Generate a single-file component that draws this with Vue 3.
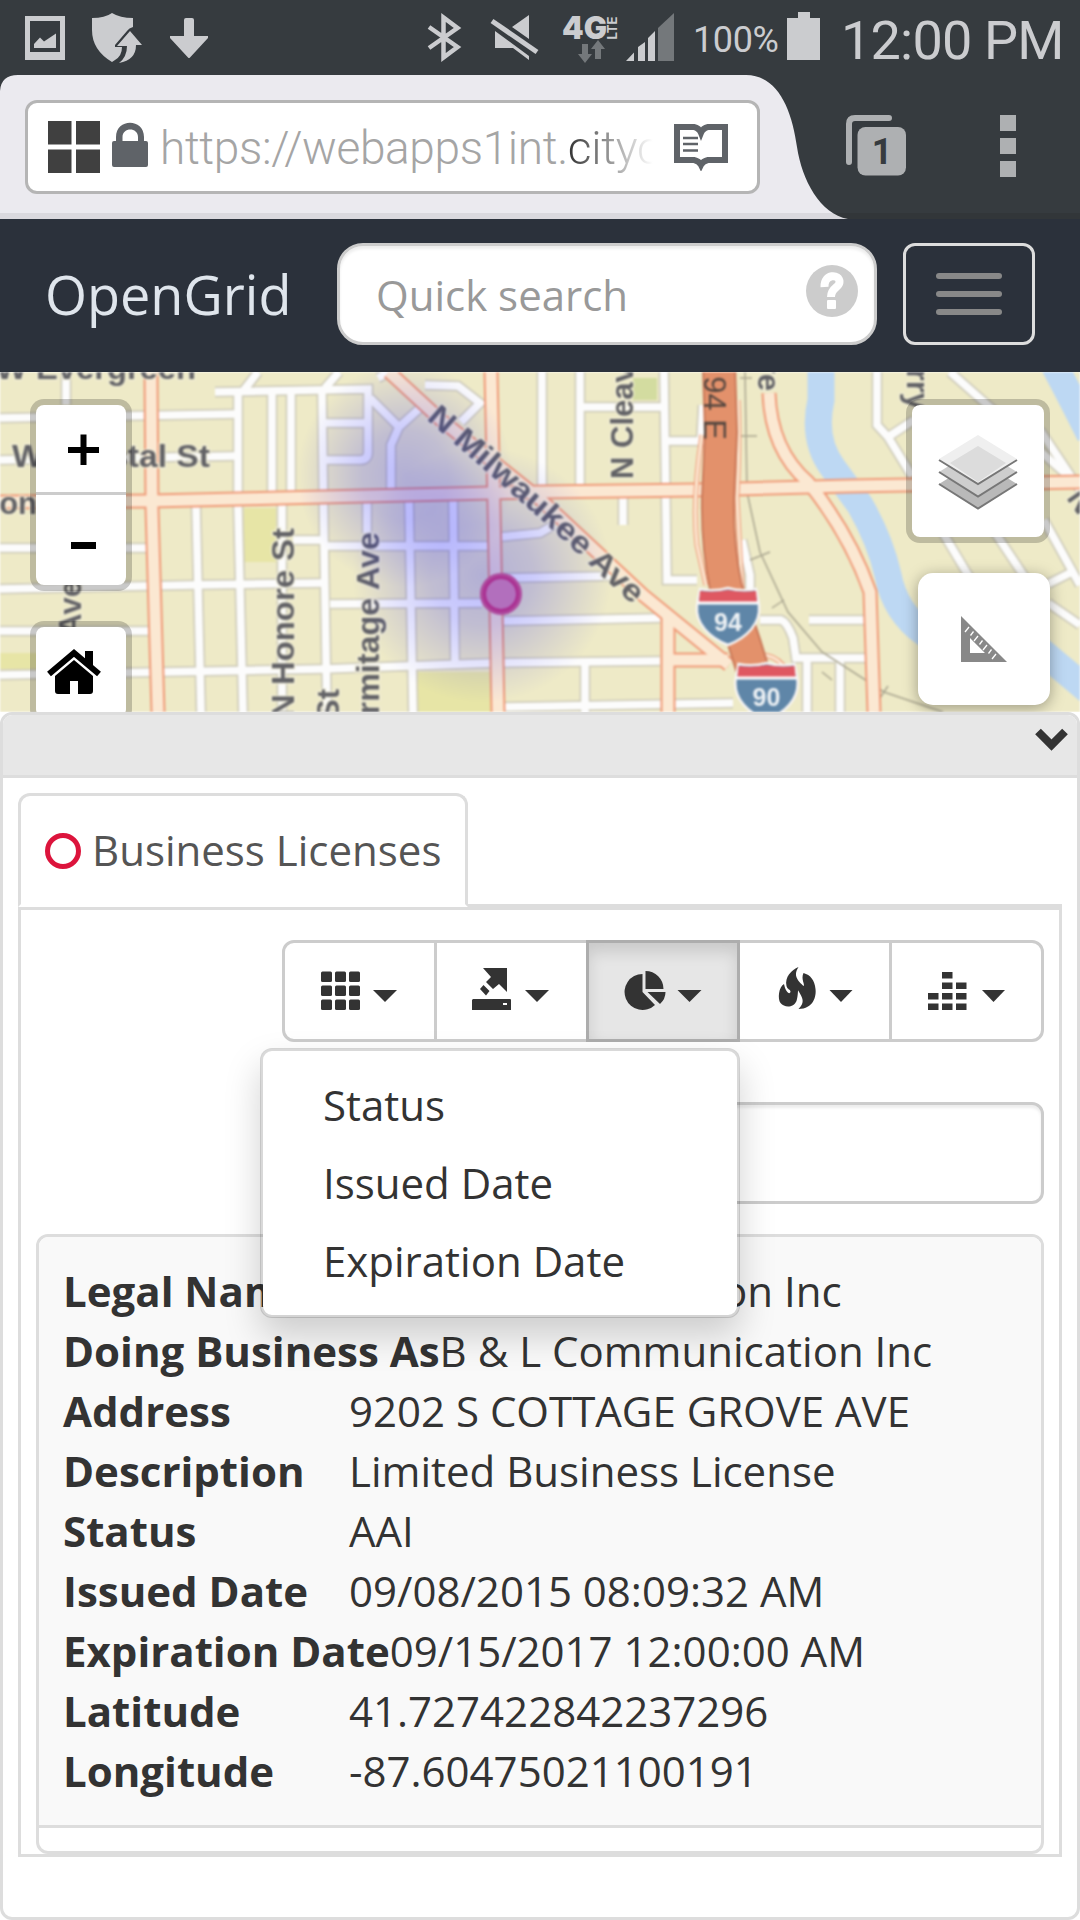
<script setup>
const whiteRoads = [
  'M0 418L237 414', 'M0 460L235 456', 'M0 548H146', 'M0 589L193 585L324 583', 'M0 631H148',
  'M0 675L324 669L492 663L660 661', 'M66 372V405', 'M238 393V508L243 712', 'M196 505L201 712',
  'M272 393V493', 'M291 393V493', 'M282 500V712', 'M322 393L324 538L327 712', 'M215 392L368 389V452Q368 460 360 460H325',
  'M325 423H368', 'M370 398L399 427L420 408M399 427L391 445V490', 'M244 390L258 372M325 388L339 372',
  'M367 500V533', 'M409 500L413 712', 'M453 500L455 662', 'M293 540H322', 'M327 546H489', 'M330 604L482 603',
  'M500 537L540 533L554 525', 'M503 578L610 576', 'M503 621L660 618', 'M505 707L733 703',
  'M425 385L458 386L480 403L461 422', 'M580 372V486', 'M542 372V486', 'M664 372L667 580H697', 'M580 407H662',
  'M667 441H701L703 405', 'M623 497V525', 'M585 662V712', 'M877 372V425L888 437L912 476', 'M888 437L914 420',
  'M950 372L1066 474', 'M1040 430L1080 490', 'M1044 520L1080 585', 'M940 528L980 595', 'M990 525L1030 585',
  'M1048 584L1072 572', 'M1048 603L1080 625', 'M809 620H864', 'M760 620H781Q787 622 793 638L796 658H867',
  'M807 658V712', 'M840 658V712', 'M742 540L750 575V590', 'M378 378L390 372'
]
const redRoads = [
  'M151 372L152 508L158 712', 'M0 502L151 501L279 498L492 493L540 492L695 490L850 486L1080 482',
  'M491 372L494 508L498 712', 'M389 372L441 420L541 500L643 595L729 665', 'M668 615V712', 'M672 660H728',
  'M769 393Q771 450 808 482Q850 535 870 592L874 712'
]
const records = [
  ['Legal Name', 'B & L Communication Inc'],
  ['Doing Business As', 'B & L Communication Inc'],
  ['Address', '9202 S COTTAGE GROVE AVE'],
  ['Description', 'Limited Business License'],
  ['Status', 'AAI'],
  ['Issued Date', '09/08/2015 08:09:32 AM'],
  ['Expiration Date', '09/15/2017 12:00:00 AM'],
  ['Latitude', '41.727422842237296'],
  ['Longitude', '-87.60475021100191']
]
const chartOptions = ['Status', 'Issued Date', 'Expiration Date']
const ticks = [0, 1, 2, 3, 4, 5, 6]
</script>

<template>
  <div class="screen">
    <header class="status">
      <svg class="left" width="220" height="75" viewBox="0 0 220 75" fill="#cbcccf">
        <path d="M25 16H65V60H25ZM30 21V52H60V21Z" fill-rule="evenodd" />
        <path d="M34 48V44L40 37.5L44 41.5L56 33.5V48Z" />
        <path d="M92 18Q105 18 112 13Q120 18 133 18V27Q129 28 127 31L115 45V47H122Q122 56 115 60L112 62Q92 50 92 30Z" />
        <path d="M130 31L142 45H136Q136 60 119 63Q127 57 127 46H117Z" />
        <path d="M184 20Q184 18 186 18H192Q194 18 194 20V36H208V38L190 57.5Q189 58.500 188 57.500L170 38V36H184Z" />
      </svg>
      <svg width="262" height="75" viewBox="424 0 262 75" fill="#cbcccf">
        <path d="M429 27L457.500 47L443.500 57.500V17.500L457.500 28L429 48" fill="none" stroke="#cbcccf" stroke-width="4.500" />
        <path d="M512 27L529 15V39ZM495 31L529 56V60L513 48H495Z" />
        <path d="M492 21L537 52" stroke="#cbcccf" stroke-width="5" />
        <text x="562" y="39" class="net" textLength="45" lengthAdjust="spacingAndGlyphs">4G</text>
        <text transform="translate(617 39.500) rotate(-90)" class="lte" textLength="23" lengthAdjust="spacingAndGlyphs">LTE</text>
        <g fill="#74787b"><path d="M582 44H588V54H592L585 63L578 54H582Z" /><path d="M595 59V49H591L598 40L605 49H601V59Z" /><path d="M658 28L674 13V61H658Z" /></g>
        <path d="M626 61L634 52.500V61ZM638 47L645 42V61H638ZM648 38L655 31V61H648Z" />
      </svg>
      <span class="percent">100%</span>
      <svg width="34" height="75" viewBox="787 0 34 75"><path d="M787 18H798V12H810V18H820V60H787Z" fill="#cbcccf" /></svg>
      <span class="clock">12:00 PM</span>
    </header>

    <section class="browser">
      <svg class="tabshape" width="1080" height="144" viewBox="0 75 1080 144">
        <rect y="213" width="1080" height="6" x="0" fill="#323639" />
        <clipPath id="tabclip"><path d="M0 91Q1 75 18 75H746C778 75 792 110 797 147C802 180 820 214 848 219H0Z" /></clipPath>
        <g clip-path="url(#tabclip)"><rect y="75" width="860" height="138" fill="#ebeaef" /><rect y="213" width="860" height="6" fill="#dad9de" /></g>
      </svg>
      <div class="urlbox">
        <svg width="104" height="60" viewBox="46 117 104 60">
          <path d="M48 121H71.500V144.500H48ZM76 121H100V144.500H76ZM48 149.500H71.500V173H48ZM76 149.500H100V173H76Z" fill="#404040" />
          <path d="M114 141H116V137C116 118 144 118 144 137V141H146Q148 141 148 143V165Q148 167 146 167H114Q112 167 112 165V143Q112 141 114 141ZM122.500 141H138V137C138 127 122.500 127 122.500 137Z" fill="#5f6368" fill-rule="evenodd" />
        </svg>
        <div class="url">https://webapps1int.<span>cityc</span></div>
        <svg class="reader" width="54" height="48" viewBox="674 126 54 48">
          <path d="M677 130H694Q699 131 701 136Q703 131 708 130H725V163H708Q703 164 701 168Q699 164 694 163H677Z" fill="#fff" stroke="#5f6368" stroke-width="6" />
          <path d="M683 141H698M683 147H698M683 153.500H698" stroke="#5f6368" stroke-width="2.500" />
        </svg>
      </div>
      <svg class="tabs" width="62" height="62" viewBox="845 114 62 62">
        <path d="M849 162V124Q849 118 855 118H889" fill="none" stroke="#aeb0b2" stroke-width="6" stroke-linecap="round" />
        <rect x="857.500" y="127" width="48.500" height="48.500" rx="8" fill="#aeb0b2" />
        <text x="882" y="164" class="count">1</text>
      </svg>
      <div class="dots"><i></i><i></i><i></i></div>
    </section>

    <nav class="navbar">
      <div class="brand">OpenGrid</div>
      <div class="quick">
        <span>Quick search</span>
        <svg width="52" height="52" viewBox="806 265 52 52">
          <circle cx="832" cy="291" r="26" fill="#ccc" />
          <path d="M824.500 287C824 273.500 839.500 273.500 839.500 282C839.500 288 831 287 831 297" fill="none" stroke="#fff" stroke-width="8" />
          <rect x="827" y="300" width="9" height="9" rx="1" fill="#fff" />
        </svg>
      </div>
      <div class="burger"><i></i><i></i><i></i></div>
    </nav>

    <section class="map">
      <svg class="tiles" width="1080" height="340" viewBox="0 372 1080 340">
        <defs>
          <radialGradient id="heat"><stop offset="0" stop-color="#00f" stop-opacity=".25" /><stop offset=".4" stop-color="#00f" stop-opacity=".19" /><stop offset="1" stop-color="#00f" stop-opacity="0" /></radialGradient>
          <path id="milwaukee" d="M426 419L480 466L545 523L634 606L680 650" />
        </defs>
        <rect y="372" width="1080" height="340" fill="#eeeac7" />
        <path d="M244 508H276V562H244ZM418 672H491V712H418ZM0 653H60V669H0Z" fill="#e7e5a6" />
        <path d="M633 378H657V400H633Z" fill="#d3dca0" />
        <path d="M821 365V400Q812 440 833 468L860 505Q880 540 888 575C900 640 960 650 1000 665M1040 650L1090 692M1054 365Q1070 395 1090 435" fill="none" stroke="#bdd8f3" stroke-width="27" />
        <g fill="none" stroke="#d0cdbc" stroke-width="11"><path v-for="d in whiteRoads" :key="d" :d="d" /></g>
        <g fill="none" stroke="#fcfcfc" stroke-width="7.500"><path v-for="d in whiteRoads" :key="d" :d="d" /></g>
        <path d="M745 372L747 492L760 552L788 612L822 652L884 692L943 712M740 378H752M738 436H757M750 560L770 552M772 608L784 600M880 698L888 686M822 672L832 680" fill="none" stroke="#aaa690" stroke-width="1.500" />
        <g fill="none" stroke="#f09a78" stroke-width="15"><path v-for="d in redRoads" :key="d" :d="d" /></g>
        <g fill="none" stroke="#fbe8d2" stroke-width="11"><path v-for="d in redRoads" :key="d" :d="d" /></g>
        <path d="M702 435Q692 500 697 545L706 585M738 400Q740 440 737 498L742 590M765 655Q780 658 788 672" fill="none" stroke="#f09a78" stroke-width="5" />
        <path d="M702 435Q692 500 697 545L706 585M738 400Q740 440 737 498L742 590M765 655Q780 658 788 672" fill="none" stroke="#fbe8d2" stroke-width="3" />
        <path d="M719 365L721 432L718 498Q717 545 726 588L745 645L762 700" fill="none" stroke="#ca7959" stroke-width="34" />
        <path d="M719 365L721 432L718 498Q717 545 726 588L745 645L762 700" fill="none" stroke="#e3916b" stroke-width="30" />
        <g class="labels">
          <text x="-4" y="379" textLength="200" lengthAdjust="spacingAndGlyphs">W Evergreen</text>
          <text x="12" y="467" textLength="198" lengthAdjust="spacingAndGlyphs">W Crystal St</text>
          <text x="37" y="514" text-anchor="end">W Division</text>
          <text transform="translate(81 580) rotate(-90)" text-anchor="end">N Wood Ave</text>
          <text transform="translate(294 718) rotate(-90)" textLength="190" lengthAdjust="spacingAndGlyphs">N Honore St</text>
          <text transform="translate(339 689) rotate(-90)" text-anchor="end">N Paulina St</text>
          <text transform="translate(379 532) rotate(-90)" text-anchor="end" textLength="256" lengthAdjust="spacingAndGlyphs">N Hermitage Ave</text>
          <text transform="translate(633 479) rotate(-90)">N Cleaver</text>
          <text class="plain" transform="translate(704 440) rotate(90)" text-anchor="end">I 94 E</text>
          <text transform="translate(758 391) rotate(90)" text-anchor="end">Ave</text>
          <text transform="translate(907 410) rotate(90)" text-anchor="end">Cherry</text>
          <text transform="translate(1066 498) rotate(55)">N</text>
          <text><textPath href="#milwaukee" textLength="278" lengthAdjust="spacingAndGlyphs">N Milwaukee Ave</textPath></text>
        </g>
        <g v-for="s in [{ n: '94', x: 728, y: 588 }, { n: '90', x: 766.500, y: 663 }]" :key="s.n" :transform="`translate(${s.x} ${s.y})`">
          <path d="M-28 1Q-14 4 0 0Q14 4 28 1L31 17C33 36 18 50 0 57C-18 50 -33 36 -31 17Z" fill="#5f86a8" stroke="#f6f4f4" stroke-width="2.500" />
          <path d="M-28 3Q-14 5 0 2Q14 5 28 3L29 14H-29Z" fill="#df5862" />
          <path d="M-30 15H30" stroke="#fff" stroke-width="3" />
          <text y="43" class="route">{{ s.n }}</text>
        </g>
        <ellipse cx="405" cy="475" rx="108" ry="112" fill="url(#heat)" />
        <ellipse cx="482" cy="575" rx="130" ry="128" fill="url(#heat)" />
        <circle cx="501" cy="594" r="17" fill="#b26fbd" />
        <circle cx="501" cy="594" r="18" fill="none" stroke="#ae4b9e" stroke-width="6" />
        <circle cx="501" cy="594" r="16.500" fill="none" stroke="#aa3092" stroke-width="3" />
      </svg>
      <div class="ctl zoom">
        <svg width="90" height="87" viewBox="36 405 90 87"><path d="M68 450H99M83.500 434.500V465" stroke="#000" stroke-width="6" /></svg>
        <svg class="minus" width="90" height="90" viewBox="36 495 90 90"><path d="M71 545.500H96" stroke="#000" stroke-width="7" /></svg>
      </div>
      <div class="ctl home">
        <svg width="90" height="90" viewBox="36 627 90 90">
          <path d="M49 674L74 653L99 674" fill="none" stroke="#000" stroke-width="6" />
          <path d="M85 651H93V666L85 660Z" />
          <path d="M55 676L74 660L93 676V691Q93 694 90 694H78V681H70V694H58Q55 694 55 691Z" />
        </svg>
      </div>
      <div class="ctl layers">
        <svg width="132" height="132" viewBox="912 405 132 132">
          <path d="M939 484L978 460L1017 484L978 509Z" fill="#b9b9b9" /><path d="M939 484L978 508.500L1017 484" fill="none" stroke="#777" stroke-width="2" />
          <path d="M939 472L978 448L1017 472L978 497Z" fill="#cecece" /><path d="M939 472L978 496.500L1017 472" fill="none" stroke="#777" stroke-width="2" />
          <path d="M939 459L978 435L1017 459L978 484Z" fill="#efefef" /><path d="M950 463L978 446L1006 463L978 482Z" fill="#dcdcdc" /><path d="M939 460L978 484L1017 460" fill="none" stroke="#777" stroke-width="2" />
        </svg>
      </div>
      <div class="measure">
        <svg width="132" height="132" viewBox="918 573 132 132">
          <path d="M961 616L1007 662H961ZM970 638V653H985Z" fill="#888" fill-rule="evenodd" />
          <path v-for="t in ticks" :key="t" :d="`M${969 + t * 4.5} ${627 + t * 4.5}l${t % 2 ? -3 : -4} ${t % 2 ? 4 : 5}`" stroke="#fff" stroke-width="1.300" />
        </svg>
      </div>
    </section>

    <main class="panel">
      <div class="bar">
        <svg width="33" height="24" viewBox="1035 728 33 24"><path d="M1038 731.500L1051.500 745L1065 731.500" fill="none" stroke="#333" stroke-width="8" /></svg>
      </div>
      <div class="tabrow">
        <div class="tab">
          <svg width="36" height="36" viewBox="0 0 36 36"><circle cx="18" cy="18" r="15.500" fill="none" stroke="#dc143c" stroke-width="5" /></svg>
          <span>Business Licenses</span>
        </div>
      </div>
      <div class="content">
        <div class="buttons">
          <button>
            <svg viewBox="285 943 149 96">
              <template v-for="r in 3" :key="r"><rect v-for="c in 3" :key="c" :x="307 + c * 14" :y="957.500 + r * 14" width="11" height="10.500" rx="1.500" /></template>
              <path d="M373 990H397L385 1002Z" />
            </svg>
          </button>
          <button>
            <svg viewBox="437 943 149 96">
              <path d="M483 968H507V992L499 984L493 989L486 982L491 977ZM480 989L483.500 985L489.500 991L486 995.500ZM473 999H510Q511 999 511 1000V1010H472V1000ZM503 1003V1005H507V1003Z" fill-rule="evenodd" />
              <path d="M525 990H549L537 1002Z" />
            </svg>
          </button>
          <button class="active">
            <svg viewBox="588.500 943 149 96">
              <path d="M642 974A18 18 0 1 0 654.500 1005L642 992ZM645 971A18 18 0 0 1 663 989H645ZM647 992H665Q665 999 659.500 1004Z" />
              <path d="M677 990H701L689 1002Z" />
            </svg>
          </button>
          <button>
            <svg viewBox="740.500 943 149 96">
              <path d="M799 967C792 970 785 977 787 986C788 990 791 989 791 992C790 995 786 992 784.500 984C779 987 778 999 781 1003C785 1008 794 1008 797 1001C799 995 798 989 799 991C803 998 806 1002 799 1009C814 1009 817 996 816 989C815 980 811 975 804 973C801 979 806 985 804 986C799 981 793 976 799 967Z" />
              <path d="M830 990H853L841.500 1002Z" />
            </svg>
          </button>
          <button>
            <svg viewBox="892 943 149 96">
              <path d="M942 972h10.500v6.500h-10.500zM942 982.500h10.500v6.500h-10.500zM956 982.500h10.500v6.500h-10.500zM928 993h10.500v6.500h-10.500zM942 993h10.500v6.500h-10.500zM956 993h10.500v6.500h-10.500zM928 1003.500h10.500v6.500h-10.500zM942 1003.500h10.500v6.500h-10.500zM956 1003.500h10.500v6.500h-10.500z" />
              <path d="M982 990H1005L993.500 1002Z" />
            </svg>
          </button>
          <ul class="menu"><li v-for="o in chartOptions" :key="o">{{ o }}</li></ul>
        </div>
        <div class="filter"></div>
        <div class="table">
          <div class="record">
            <div v-for="[k, v] in records" :key="k" class="row"><b>{{ k }}</b><span>{{ v }}</span></div>
          </div>
        </div>
      </div>
    </main>
  </div>
</template>

<style>
body { margin: 0; background: #fff; }
</style>

<style scoped>
* { box-sizing: border-box; }
svg { display: block; flex: none; }
.screen { width: 1080px; height: 1920px; overflow: hidden; font-family: "Open Sans", sans-serif; color: #333; font-size: 42px; line-height: 60px; }
.status { height: 75px; display: flex; background: #363b3f; color: #cbcccf; font-family: Roboto, sans-serif; white-space: nowrap; }
.status .left { margin-right: 204px; }
.net { font: 900 31px Inter, sans-serif; }
.lte { font: 700 13px Inter, sans-serif; }
.percent { width: 101px; padding-left: 7px; font-size: 36px; line-height: 81px; letter-spacing: -.4px; }
.clock { padding-left: 20px; font-size: 54px; line-height: 82px; letter-spacing: -.8px; }
.browser { position: relative; height: 144px; display: flex; background: #363b3f; }
.tabshape { position: absolute; inset: 0; }
.urlbox { position: relative; margin: 25px 0 0 25px; width: 735px; height: 94px; border: 3px solid #b5b5b5; border-radius: 12px; background: #fff; display: flex; align-items: center; padding-left: 18px; }
.url { margin: 2px 0 0 10px; width: 510px; overflow: hidden; white-space: nowrap; font: 300 46px/60px Roboto, sans-serif; letter-spacing: -.35px; color: #a5a5a5; }
.url span { background: linear-gradient(90deg, #333, #fff 92%); background-clip: text; color: transparent; }
.reader { margin-left: 4px; }
.tabs { margin: 39px 0 0 85px; position: relative; }
.count { font: 700 36px Roboto, sans-serif; fill: #363b3f; text-anchor: middle; }
.dots { position: relative; margin: 40px 0 0 93px; display: flex; flex-direction: column; gap: 7px; }
.dots i { width: 16px; height: 16px; background: #aeb0b2; }
.navbar { height: 153px; background: #2b313b; display: flex; padding: 24px 0 0 45px; }
.brand { width: 292px; font-size: 54px; line-height: 102px; color: #dfe5ec; }
.quick { width: 540px; height: 102px; border: 3px solid #ccc; border-radius: 26px; background: #fff; box-shadow: inset 0 3px 3px rgba(0,0,0,.075); display: flex; justify-content: space-between; padding: 0 16px 0 36px; color: #999; line-height: 97px; }
.quick svg { margin-top: 19px; }
.burger { margin-left: 26px; width: 132px; height: 102px; border: 3px solid #ddd; border-radius: 12px; display: flex; flex-direction: column; align-items: center; padding-top: 27px; gap: 12px; }
.burger i { width: 66px; height: 6px; border-radius: 3px; background: #888; }
.map { position: relative; height: 340px; overflow: hidden; }
.tiles { filter: blur(.8px); }
.labels { font: 700 31px "Liberation Sans", sans-serif; fill: #626266; stroke: #f1eed8; stroke-width: 3px; paint-order: stroke; stroke-opacity: .7; }
.labels .plain { fill: #54463f; stroke: none; font-weight: 400; }
.route { font: 700 25px "Liberation Sans", sans-serif; fill: #eef2f5; text-anchor: middle; }
.ctl { position: absolute; border: 6px solid rgba(0,0,0,.2); border-radius: 14px; background: #fff; background-clip: padding-box; }
.zoom { left: 30px; top: 27px; }
.minus { border-top: 3px solid #ccc; height: 93px; }
.home { left: 30px; top: 249px; }
.layers { left: 906px; top: 27px; }
.measure { position: absolute; left: 918px; top: 201px; border-radius: 15px; background: #fff; box-shadow: 0 3px 15px rgba(0,0,0,.35); }
.panel { height: 1208px; border: 3px solid #ddd; border-radius: 12px; background: #fff; }
.bar { height: 63px; background: #e7e7e7; border-bottom: 3px solid #ddd; border-radius: 9px 9px 0 0; display: flex; justify-content: flex-end; padding: 13px 9px 0 0; }
.tabrow { margin: 15px 15px 0; height: 114px; border-bottom: 3px solid #ddd; }
.tab { width: 450px; height: 114px; border: 3px solid #ddd; border-bottom-color: #fff; border-radius: 12px 12px 0 0; background: #fff; display: flex; align-items: center; padding-left: 24px; color: #555; white-space: nowrap; }
.tab span { margin-left: 11px; }
.tab svg { margin-top: 1px; }
.content { margin: 0 15px; height: 950px; border: 3px solid #ddd; padding: 30px 15px 0; }
.buttons { position: relative; margin-left: auto; width: 762px; height: 102px; display: flex; }
button { flex: 1 1 0; min-width: 0; height: 102px; margin: 0 0 0 -3px; padding: 0; border: 3px solid #ccc; background: #fff; }
button:first-child { margin-left: 0; border-radius: 12px 0 0 12px; }
button:nth-child(5) { border-radius: 0 12px 12px 0; }
button svg { width: 149px; height: 96px; margin-right: -1px; fill: #333; }
button.active { position: relative; background: #e6e6e6; border-color: #adadad; box-shadow: inset 0 9px 15px rgba(0,0,0,.125); }
.menu { position: absolute; z-index: 2; left: -22px; top: 108px; width: 480px; height: 270px; margin: 0; padding: 15px 0 0 60px; list-style: none; background: #fff; background-clip: padding-box; border: 3px solid rgba(0,0,0,.15); border-radius: 12px; box-shadow: 0 18px 36px rgba(0,0,0,.175); }
.menu li { height: 78px; line-height: 78px; }
.filter { margin: 60px 0 0 auto; width: 714px; height: 102px; border: 3px solid #ccc; border-radius: 12px; box-shadow: inset 0 3px 3px rgba(0,0,0,.075); }
.table { margin-top: 30px; height: 620px; border: 3px solid #ddd; border-radius: 12px; overflow: hidden; }
.record { height: 591px; padding: 24px 0 0 24px; background: #f9f9f9; border-bottom: 3px solid #ddd; white-space: nowrap; }
.row { display: flex; height: 60px; }
.row b { min-width: 286px; }
</style>
